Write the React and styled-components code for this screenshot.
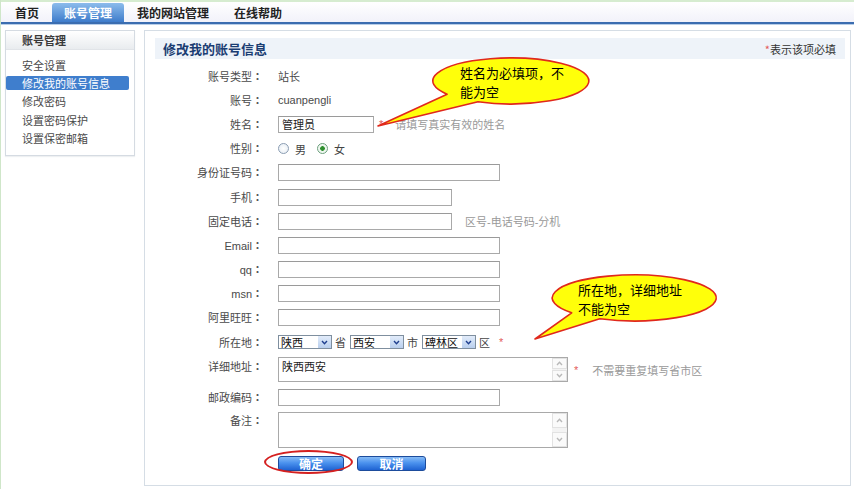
import React from 'react';
import styled, { createGlobalStyle } from 'styled-components';

const GlobalStyle = createGlobalStyle`
  html, body { margin: 0; padding: 0; background: #fff; }
  body {
    font-family: "Liberation Sans", "Noto Sans CJK SC", sans-serif;
    font-size: 11px;
    color: #444;
  }
  * { box-sizing: border-box; }
`;

const CJK = `"Noto Sans CJK SC", "Liberation Sans", sans-serif`;

const Page = styled.div`
  position: relative;
  width: 854px;
  height: 489px;
  overflow: hidden;
  border-left: 1px solid #cfe6c9;
  display: flex;
  flex-direction: column;
`;

const NavBar = styled.nav`
  height: 24px;
  flex: none;
  border-top: 2px solid #d6ecd0;
  border-bottom: 2px solid #3b6db0;
  box-shadow: 0 1px 0 #b8cee8;
  background: linear-gradient(#ffffff, #f2f2fa);
  display: flex;
  align-items: flex-end;
  gap: 1px;
  padding-left: 2px;
`;

const Tab = styled.a`
  height: 19px;
  line-height: 19px;
  padding: 0 12px;
  font-family: ${CJK};
  font-size: 12px;
  font-weight: 700;
  color: ${p => (p.$active ? '#fff' : '#222')};
  background: ${p => (p.$active ? 'linear-gradient(#8cbcec, #3e7ccb)' : 'transparent')};
  border-radius: 3px 3px 0 0;
  cursor: pointer;
`;

const Body = styled.div`
  flex: 1;
  display: flex;
  align-items: flex-start;
  gap: 9px;
  padding: 6px 3px 0 4px;
`;

const Sidebar = styled.aside`
  width: 130px;
  flex: none;
  border: 1px solid #d5dbe2;
  background: #fff;
  box-shadow: 0 1px 1px #eef0f2;
`;

const SideHead = styled.div`
  height: 19px;
  line-height: 18px;
  padding-left: 16px;
  font-family: ${CJK};
  font-size: 11px;
  font-weight: 700;
  color: #3a3a3a;
  background: linear-gradient(#ffffff, #e9ecef);
  border-bottom: 1px solid #e1e4e8;
`;

const SideList = styled.ul`
  list-style: none;
  margin: 0;
  padding: 8px 5px 10px 0;
  display: flex;
  flex-direction: column;
  gap: 4.2px;
`;

const SideItem = styled.li`
  height: 14px;
  line-height: 14px;
  padding-left: 16px;
  font-family: ${CJK};
  font-size: 11px;
  color: ${p => (p.$active ? '#fff' : '#4a4a4a')};
  background: ${p => (p.$active ? '#3f7ecd' : 'transparent')};
  border-radius: 2px;
`;

const Panel = styled.main`
  flex: 1;
  height: 456px;
  border: 1px solid #d5dde5;
  padding: 7px 5px 0 10px;
  background: #fff;
`;

const PanelHead = styled.div`
  height: 21px;
  background: #eef3f9;
  display: flex;
  align-items: center;
  justify-content: space-between;
  padding: 0 9px 0 8px;
`;

const Title = styled.h2`
  margin: 0;
  font-family: ${CJK};
  font-size: 13px;
  font-weight: 700;
  color: #1b3d72;
`;

const Note = styled.span`
  font-family: ${CJK};
  font-size: 11px;
  color: #333;
`;

const Star = styled.span`
  color: #e35a5a;
  margin-left: ${p => p.$ml || 0}px;
`;

const Form = styled.form`
  margin-top: 5px;
  display: flex;
  flex-direction: column;
`;

const Row = styled.div`
  display: grid;
  grid-template-columns: 108px auto;
  column-gap: 15px;
  align-items: ${p => (p.$top ? 'start' : 'center')};
  height: ${p => p.$h || 24.2}px;
  margin-top: ${p => p.$mt || 0}px;
`;

const LabelBox = styled.label`
  text-align: right;
  line-height: 14px;
  color: #4a4a4a;
  padding-top: ${p => p.$pt || 0}px;
`;

const Colon = styled.span`
  font-family: "Noto Sans CJK JP", sans-serif;
  font-weight: 700;
  color: #555;
`;

const Label = ({ children, pt }) => (
  <LabelBox $pt={pt}>
    {children}
    <Colon>：</Colon>
  </LabelBox>
);

const Field = styled.div`
  display: flex;
  align-items: center;
`;

const Value = styled.span`
  color: #4a4a4a;
`;

const Input = styled.input`
  width: ${p => p.$w}px;
  height: 17px;
  border: 1px solid #a9a9a9;
  border-top-color: #9a9a9a;
  padding: 0 3px;
  font-family: ${CJK};
  font-size: 11px;
  color: #222;
  outline: none;
  background: #fff;
`;

const Hint = styled.span`
  margin-left: ${p => p.$ml || 13}px;
  color: #999;
`;

const RadioLabel = styled.label`
  display: inline-flex;
  align-items: center;
  gap: 6px;
  margin-right: 11px;
  color: #444;
`;

const Radio = styled.input.attrs({ type: 'radio' })`
  appearance: none;
  width: 11px;
  height: 11px;
  margin: 0;
  border: 1px solid #8b9db3;
  border-radius: 50%;
  background: radial-gradient(#ffffff, #e4ebf2);
  &:checked {
    border-color: #6c9f7d;
    background: radial-gradient(circle, #2f8f2f 0 2px, #e9f4ea 2.6px, #ffffff 100%);
  }
`;

const SelectBox = styled.span`
  display: inline-flex;
  width: 54px;
  height: 14px;
  border: 1px solid #7f8f9f;
  background: #fff;
`;

const NativeSelect = styled.select`
  appearance: none;
  border: 0;
  outline: none;
  flex: 1;
  min-width: 0;
  height: 100%;
  padding: 0 2px;
  font-family: ${CJK};
  font-size: 11px;
  line-height: 12px;
  color: #111;
  background: transparent;
`;

const SelectArrow = styled.span`
  width: 14px;
  flex: none;
  display: flex;
  align-items: center;
  justify-content: center;
  background: linear-gradient(#e2ecfa, #b9cfee);
  border-left: 1px solid #fff;
`;

const Unit = styled.span`
  margin: 0 4px 0 3px;
  color: #444;
`;

const AreaBox = styled.div`
  display: flex;
  width: 290px;
  height: ${p => p.$h}px;
  border: 1px solid #a9a9a9;
  background: #fff;
`;

const Area = styled.textarea`
  flex: 1;
  border: 0;
  resize: none;
  outline: none;
  overflow: hidden;
  padding: 1px 3px;
  font-family: ${CJK};
  font-size: 11px;
  line-height: 14px;
  color: #222;
`;

const ScrollBar = styled.div`
  width: 15px;
  flex: none;
  display: flex;
  flex-direction: column;
  justify-content: space-between;
  background: #f3f3f3;
`;

const ScrollBtn = styled.span`
  height: ${p => p.$h}px;
  display: flex;
  align-items: center;
  justify-content: center;
  border: 1px solid #e2e2e2;
  background: #fafafa;
`;

const ButtonRow = styled.div`
  position: relative;
  display: flex;
  gap: 13px;
`;

const Btn = styled.button`
  width: ${p => p.$w}px;
  height: 15px;
  padding: 0;
  border: 1px solid #1d4c9c;
  border-radius: 3px;
  background: linear-gradient(#86bbf6 0%, #4b92ee 45%, #1f63d2 100%);
  color: #fff;
  font-family: ${CJK};
  font-size: 12px;
  font-weight: 700;
  line-height: 13px;
  cursor: pointer;
`;

const RingMark = styled.span`
  position: absolute;
  left: -14px;
  top: -6px;
  width: 89px;
  height: 24px;
  border: 2px solid #d42020;
  border-radius: 50%;
  pointer-events: none;
`;

const Callout = styled.div`
  position: absolute;
  left: ${p => p.$x}px;
  top: ${p => p.$y}px;
  width: ${p => p.$w}px;
  height: ${p => p.$h}px;
  pointer-events: none;
`;

const CalloutShape = styled.svg`
  display: block;
  width: 100%;
  height: 100%;
`;

const CalloutText = styled.div`
  position: absolute;
  left: ${p => p.$tx}px;
  top: ${p => p.$ty}px;
  font-family: ${CJK};
  font-size: 13px;
  line-height: 19px;
  color: #000;
  white-space: nowrap;
`;

const Chevron = ({ up, color = '#1f3f8f', w = 7 }) => (
  <svg width={w} height="5" viewBox="0 0 7 5">
    <polyline
      points={up ? '1,4 3.5,1.3 6,4' : '1,1 3.5,3.7 6,1'}
      fill="none"
      stroke={color}
      strokeWidth="1.4"
    />
  </svg>
);

const Select = ({ value }) => (
  <SelectBox>
    <NativeSelect defaultValue={value}>
      <option>{value}</option>
    </NativeSelect>
    <SelectArrow>
      <Chevron />
    </SelectArrow>
  </SelectBox>
);

const TextArea = ({ h, btn, value }) => (
  <AreaBox $h={h}>
    <Area defaultValue={value} />
    <ScrollBar>
      <ScrollBtn $h={btn}>
        <Chevron up color="#b8b8b8" />
      </ScrollBtn>
      <ScrollBtn $h={btn}>
        <Chevron color="#b8b8b8" />
      </ScrollBtn>
    </ScrollBar>
  </AreaBox>
);

const tabs = ['首页', '账号管理', '我的网站管理', '在线帮助'];
const sideItems = ['安全设置', '修改我的账号信息', '修改密码', '设置密码保护', '设置保密邮箱'];

const plainInputs = [
  ['身份证号码', 222],
  ['手机', 174],
  ['固定电话', 174, '区号-电话号码-分机'],
  ['Email', 222],
  ['qq', 222],
  ['msn', 222],
  ['阿里旺旺', 222],
];

export default function App() {
  return (
    <>
      <GlobalStyle />
      <Page>
        <NavBar>
          {tabs.map(t => (
            <Tab key={t} $active={t === '账号管理'}>{t}</Tab>
          ))}
        </NavBar>
        <Body>
          <Sidebar>
            <SideHead>账号管理</SideHead>
            <SideList>
              {sideItems.map(s => (
                <SideItem key={s} $active={s === '修改我的账号信息'}>{s}</SideItem>
              ))}
            </SideList>
          </Sidebar>
          <Panel>
            <PanelHead>
              <Title>修改我的账号信息</Title>
              <Note><Star>*</Star>表示该项必填</Note>
            </PanelHead>
            <Form onSubmit={e => e.preventDefault()}>
              <Row>
                <Label>账号类型</Label>
                <Field><Value>站长</Value></Field>
              </Row>
              <Row>
                <Label>账号</Label>
                <Field><Value>cuanpengli</Value></Field>
              </Row>
              <Row>
                <Label>姓名</Label>
                <Field>
                  <Input $w={96} defaultValue="管理员" />
                  <Star $ml={5}>*</Star>
                  <Hint $ml={12}>请填写真实有效的姓名</Hint>
                </Field>
              </Row>
              <Row>
                <Label>性别</Label>
                <Field>
                  <RadioLabel><Radio name="sex" />男</RadioLabel>
                  <RadioLabel><Radio name="sex" defaultChecked />女</RadioLabel>
                </Field>
              </Row>
              {plainInputs.map(([label, w, hint]) => (
                <Row key={label}>
                  <Label>{label}</Label>
                  <Field>
                    <Input $w={w} />
                    {hint && <Hint>{hint}</Hint>}
                  </Field>
                </Row>
              ))}
              <Row>
                <Label>所在地</Label>
                <Field>
                  <Select value="陕西" />
                  <Unit>省</Unit>
                  <Select value="西安" />
                  <Unit>市</Unit>
                  <Select value="碑林区" />
                  <Unit>区</Unit>
                  <Star $ml={5}>*</Star>
                </Field>
              </Row>
              <Row $top $h={25} $mt={3}>
                <Label pt={2}>详细地址</Label>
                <Field>
                  <TextArea h={25} btn={11} value="陕西西安" />
                  <Star $ml={6}>*</Star>
                  <Hint $ml={14}>不需要重复填写省市区</Hint>
                </Field>
              </Row>
              <Row $h={17} $mt={7}>
                <Label>邮政编码</Label>
                <Field><Input $w={222} /></Field>
              </Row>
              <Row $top $h={36} $mt={6}>
                <Label pt={1}>备注</Label>
                <Field>
                  <TextArea h={36} btn={15} value="" />
                </Field>
              </Row>
              <Row $h={15} $mt={8}>
                <span />
                <ButtonRow>
                  <Btn type="submit" $w={66}>确定</Btn>
                  <Btn type="button" $w={69}>取消</Btn>
                  <RingMark />
                </ButtonRow>
              </Row>
            </Form>
          </Panel>
        </Body>

        <Callout $x={369} $y={55} $w={225} $h={78}>
          <CalloutShape viewBox="0 0 225 78">
            <path
              d="M 108 46.8 A 78 23 0 1 0 77.1 39.2 L 8 71 Z"
              fill="#ffff0a"
              stroke="#e0281c"
              strokeWidth="1.6"
              strokeLinejoin="round"
            />
          </CalloutShape>
          <CalloutText $tx={90} $ty={8}>姓名为必填项，不<br />能为空</CalloutText>
        </Callout>

        <Callout $x={527} $y={270} $w={195} $h={75}>
          <CalloutShape viewBox="0 0 195 75">
            <path
              d="M 71.8 48.8 A 82 23 0 1 0 43.7 42.8 L 7 69 Z"
              fill="#ffff0a"
              stroke="#e0281c"
              strokeWidth="1.6"
              strokeLinejoin="round"
            />
          </CalloutShape>
          <CalloutText $tx={50} $ty={10}>所在地，详细地址<br />不能为空</CalloutText>
        </Callout>
      </Page>
    </>
  );
}
